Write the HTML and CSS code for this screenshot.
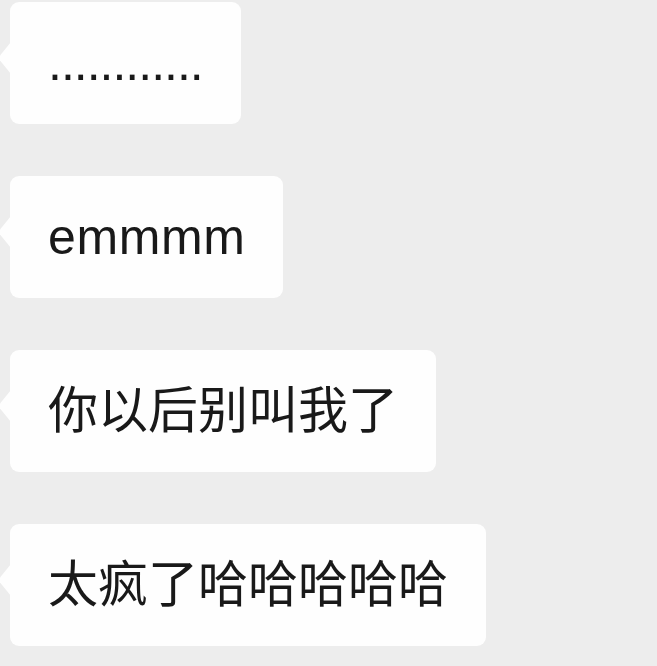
FILE: index.html
```html
<!DOCTYPE html>
<html lang="zh-CN">
  <head>
    <meta charset="UTF-8" />
    <meta name="viewport" content="width=device-width, initial-scale=1.0" />
    <title>聊天</title>
    <link rel="stylesheet" href="styles.css">
  </head>
  <body>
    <div class="chat">
      <div class="msg msg-dots">............</div>
      <div class="msg msg-latin">emmmm</div>
      <div class="msg">你以后别叫我了</div>
      <div class="msg">太疯了哈哈哈哈哈</div>
    </div>
  </body>
</html>
```

FILE: styles.css
```css
:root {
  --bg: #ededed;       /* фон чату */
  --bubble: #fefefe;
  --text: #191919;
}

body {
  margin: 0;
  background: var(--bg);
  color: var(--text);
  font-family: "Liberation Sans", "Noto Sans CJK SC", sans-serif;
}

.chat {
  display: flex;
  flex-direction: column;
  align-items: flex-start;
  gap: 52px;
  padding: 2px 0 0 10px;
}

.msg {
  position: relative;
  background: var(--bubble);
  border-radius: 9px;
  padding: 26px 38px;
  font-size: 50px;
  line-height: 70px;
  white-space: nowrap;
}

.msg-dots {
  letter-spacing: -1px;
}

.msg-latin {
  letter-spacing: 0.6px;
}

/* хвостик бульбашки */
.msg::before {
  content: "";
  position: absolute;
  left: -10px;
  top: 40px;
  width: 11px;
  height: 32px;
  background: var(--bubble);
  clip-path: polygon(100% 0, 0 42%, 0 58%, 100% 100%);
}
```
